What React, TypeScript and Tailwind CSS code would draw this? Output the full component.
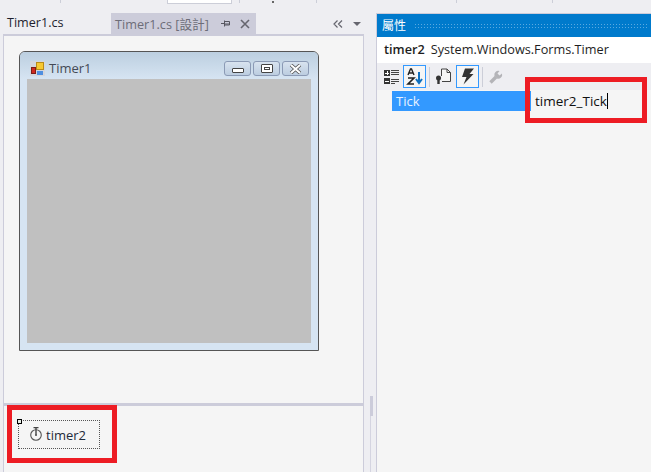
import React from 'react';

const FONT = "font-['Open_Sans','Noto_Sans_CJK_TC',sans-serif]";

const CaptionButton: React.FC<{ children: React.ReactNode }> = ({ children }) => (
  <div className="w-[27px] h-[15px] rounded-[3px] border border-[#8b9ab5] bg-gradient-to-b from-[#d8e3ef] to-[#bccde0] flex items-center justify-center">
    {children}
  </div>
);

const FormWindow: React.FC = () => (
  <div className="w-[300px] h-[300px] ml-[15px] mt-[15px] border border-[#555555] rounded-t-[6px] bg-[#d6e4f2] flex flex-col">
    <div className="h-[27px] shrink-0 rounded-t-[5px] bg-gradient-to-b from-[#bccfe0] to-[#d6e4f2] flex items-start pt-[9px] pl-[10px] pr-[9px]">
      <svg width="15" height="15" viewBox="0 0 15 15">
        <rect x="0" y="0" width="15" height="15" fill="#d4d6dc" />
        <rect x="6.5" y="1.5" width="7" height="7" fill="#f6c932" stroke="#b98c18" />
        <rect x="1.5" y="6.5" width="4" height="6" fill="#d0281f" stroke="#7c1c18" />
        <rect x="7" y="10" width="6" height="4" fill="#4f8fe0" />
      </svg>
      <span className="ml-[4px] text-[13px] leading-[15px] text-[#444a55]">Timer1</span>
      <div className="ml-auto flex gap-[2px]">
        <CaptionButton>
          <div className="w-[12px] h-[5px] mt-[4px] border border-[#444] bg-white rounded-[1px]" />
        </CaptionButton>
        <CaptionButton>
          <div className="w-[12px] h-[9px] border border-[#444] bg-white rounded-[1px] flex items-center justify-center">
            <div className="w-[6px] h-[3px] border border-[#444]" />
          </div>
        </CaptionButton>
        <CaptionButton>
          <svg width="13" height="10" viewBox="0 0 13 10">
            <path d="M2 1 L11 9 M11 1 L2 9" stroke="#555" strokeWidth="3.6" />
            <path d="M2 1 L11 9 M11 1 L2 9" stroke="#fff" strokeWidth="2" />
          </svg>
        </CaptionButton>
      </div>
    </div>
    <div className="mx-[7px] h-[264px] bg-[#c0c0c0]" />
  </div>
);

const DesignerTabs: React.FC = () => (
  <div className="h-[21px] flex items-stretch shrink-0">
    <div className="w-[108px] pl-[4px] text-[12.6px] leading-[20px] text-[#1e1e2e]">Timer1.cs</div>
    <div className="w-[145px] bg-[#ccccda] flex items-center pl-[4px] text-[#6d6d78]">
      <span className="text-[12.7px] leading-[20px]">Timer1.cs [設計]</span>
      <svg className="ml-[12px]" width="9" height="9" viewBox="0 0 9 9">
        <path d="M0 4.5 H3 M3.5 1.5 V7.5 M3.5 2.5 H8.5 V6 H3.5 M3.5 5 H8.5" stroke="#55555f" fill="none" />
      </svg>
      <svg className="ml-[10px]" width="10" height="10" viewBox="0 0 10 10">
        <path d="M1 1 L9 9 M9 1 L1 9" stroke="#66666f" strokeWidth="1.6" />
      </svg>
    </div>
    <div className="flex-1 flex items-center justify-end pr-[3px] gap-[10px]">
      <svg width="10" height="8" viewBox="0 0 10 8">
        <path d="M4.5 0.5 L1 4 L4.5 7.5 M9 0.5 L5.5 4 L9 7.5" stroke="#66666f" fill="none" strokeWidth="1.2" />
      </svg>
      <svg width="8" height="4" viewBox="0 0 8 4">
        <path d="M0 0 H8 L4 4 Z" fill="#66666f" />
      </svg>
    </div>
  </div>
);

const TimerGlyph: React.FC = () => (
  <svg className="-mt-[1px]" width="12" height="14" viewBox="0 0 12 14">
    <path d="M3.5 0.5 H8.5 M6 0.5 V7.5" stroke="#444" strokeWidth="1.4" fill="none" />
    <circle cx="6" cy="8" r="5.3" stroke="#555" strokeWidth="1.1" fill="none" />
    <circle cx="6" cy="8" r="1" fill="#444" />
  </svg>
);

const PropertyToolbar: React.FC = () => (
  <div className="h-[27px] shrink-0 flex items-center pl-[7px]">
    <svg width="15" height="15" viewBox="0 0 15 15" shapeRendering="crispEdges">
      <path d="M0 1 H6 V7 H0 Z M0 9 H6 V15 H0 Z" fill="#333" />
      <path d="M1 4 H5 M3 2 V6 M1 12 H5" stroke="#fff" />
      <path d="M7 1.5 H15 M7 3.5 H15 M7 5.5 H15 M7 10.5 H15 M7 12.5 H15 M7 14.5 H11" stroke="#444" />
    </svg>
    <div className="ml-[4px] w-[23px] h-[23px] border border-[#3399ff] bg-[#f5f5f5] flex items-center justify-center">
      <svg width="17" height="17" viewBox="0 0 17 17">
        <path d="M2 7 L4.5 1 H5.5 L8 7 M3 5 H7" stroke="#222" strokeWidth="1.4" fill="none" />
        <path d="M2 10 H8 L2 16 H8" stroke="#222" strokeWidth="1.6" fill="none" />
        <path d="M13 4 V14 M10 11 L13 15 L16 11" stroke="#0e70c0" strokeWidth="2" fill="none" />
      </svg>
    </div>
    <div className="ml-[3px] w-px h-[20px] bg-[#ccced8]" />
    <svg className="ml-[5px]" width="16" height="17" viewBox="0 0 16 17">
      <path d="M6.5 8 V1 H12 L15.5 4.5 V13.5 H7" stroke="#444" fill="#f5f5f5" />
      <path d="M12 1 V4.5 H15.5" stroke="#444" fill="none" />
      <circle cx="3.5" cy="10" r="2.5" fill="#333" />
      <path d="M3.5 10 V16" stroke="#333" strokeWidth="2.4" />
    </svg>
    <div className="ml-[5px] w-[23px] h-[23px] border border-[#3399ff] bg-[#f5f5f5] flex items-center justify-center">
      <svg width="14" height="17" viewBox="0 0 14 17">
        <path d="M4 0.5 H13 L8.5 6 H12.5 L2.5 16.5 L5.5 9 H1 Z" fill="#333" />
      </svg>
    </div>
    <div className="ml-[3px] w-px h-[20px] bg-[#ccced8]" />
    <svg className="ml-[6px]" width="14" height="14" viewBox="0 0 14 14">
      <path d="M1.5 12.5 L7 7" stroke="#b4b4b8" strokeWidth="3.4" />
      <path d="M5.5 6 A4 4 0 0 1 10.5 1 L8.5 3.5 L10.5 5.5 L13 3.5 A4 4 0 0 1 8 8.5 Z" fill="#b4b4b8" />
    </svg>
  </div>
);

export default function App() {
  return (
    <div className={`${FONT} relative w-[651px] h-[472px] overflow-hidden bg-[#eeeef2] flex flex-col`}>
      {/* top toolbar remains */}
      <div className="h-[13px] shrink-0 flex items-start">
        <div className="w-px h-[3px] ml-[60px] bg-[#ccced8]" />
        <div className="w-[65px] h-[4px] ml-[106px] bg-white border-x border-b border-[#ccced8]" />
        <div className="w-px h-[3px] ml-[7px] bg-[#ccced8]" />
        <div className="w-[2px] h-[2px] ml-[32px] mt-[1px] bg-[#666]" />
        <div className="w-px h-[3px] ml-[42px] bg-[#ccced8]" />
        <div className="w-px h-[3px] ml-[139px] bg-[#ccced8]" />
        <div className="w-px h-[3px] ml-[95px] bg-[#ccced8]" />
      </div>

      <div className="flex-1 flex min-h-0">
        {/* designer */}
        <div className="w-[364px] shrink-0 pl-[3px] flex flex-col">
          <DesignerTabs />
          <div className="flex-1 flex flex-col border-x border-[#ccccda] border-t-2 bg-[#f5f5f5]">
            <div className="h-[367px] shrink-0">
              <FormWindow />
            </div>
            <div className="h-[3px] shrink-0 bg-[#ccccda]" />
            <div className="flex-1 pl-[14px] pt-[14px]">
              <div className="relative w-[82px] h-[29px] border border-dotted border-[#555] flex items-center pl-[11px]">
                <div className="absolute -left-[2px] -top-[2px] w-[5px] h-[5px] border border-black bg-[#e8f0e8]" />
                <TimerGlyph />
                <span className="ml-[4px] mt-[2px] text-[13px] leading-none text-[#1e2a3a]">timer2</span>
              </div>
            </div>
          </div>
        </div>

        {/* splitter */}
        <div className="w-[12px] shrink-0 pl-[6px]">
          <div className="h-full border-l border-[#d4d4e0]">
            <div className="w-[3px] h-[20px] mt-[383px] -ml-px bg-[#ccccda]" />
          </div>
        </div>

        {/* properties panel */}
        <div className="flex-1 flex flex-col border-l border-[#ccccda] border-t border-t-[#ccccda] min-w-0">
          <div className="h-[23px] shrink-0 bg-[#007acc] flex items-center pl-[5px]">
            <span className="text-[12px] leading-none text-white">屬性</span>
            <div className="flex-1 h-[5px] ml-[8px] mr-[2px] bg-[radial-gradient(#5aa9e0_1px,transparent_1px)] bg-[length:3px_3px]" />
          </div>
          <div className="h-[26px] shrink-0 bg-white flex items-center pl-[7px] text-[12.7px] text-[#1e1e1e]">
            <span className="font-semibold">timer2</span>
            <span className="ml-[6px]">System.Windows.Forms.Timer</span>
          </div>
          <PropertyToolbar />
          <div className="flex-1 bg-[#f5f5f5]">
            <div className="flex h-[20px] ml-[15px] mt-px">
              <div className="w-[139px] bg-[#3399ff] pl-[4px] text-[13px] leading-[20px] text-[#e8f2ff]">Tick</div>
              <div className="flex-1 pl-[4px] text-[13.5px] leading-[20px] text-[#111] flex items-center">
                <span className="font-medium">timer2_Tick</span>
                <div className="w-px h-[16px] bg-black" />
              </div>
            </div>
          </div>
        </div>
      </div>

      {/* red annotations drawn over the screenshot */}
      <div className="absolute left-[525px] top-[77px] w-[122px] h-[46px] border-[5px] border-[#ed1c24]" />
      <div className="absolute left-[7px] top-[405px] w-[110px] h-[58px] border-[5px] border-[#ed1c24]" />
    </div>
  );
}
